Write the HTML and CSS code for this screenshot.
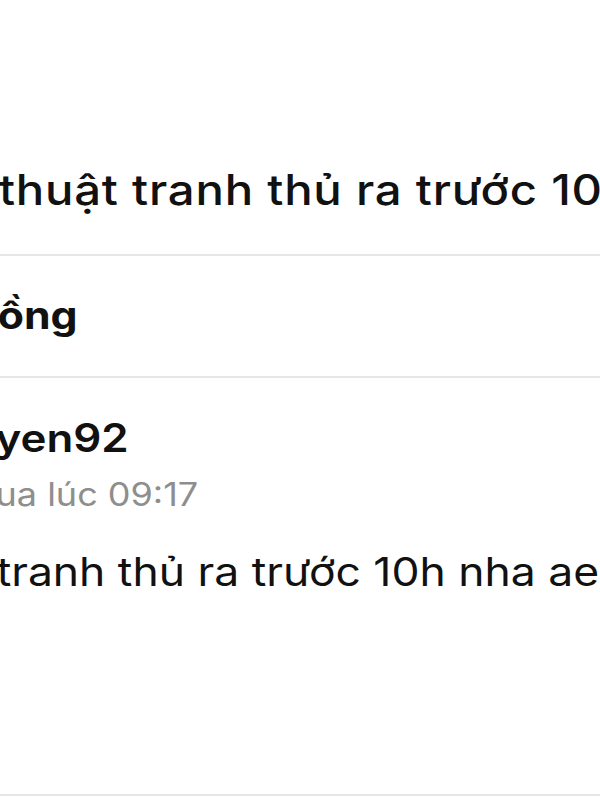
FILE: index.html
```html
<!DOCTYPE html>
<html lang="vi">
<head>
  <meta charset="UTF-8">
  <title>Bài viết</title>
  <link rel="stylesheet" href="styles.css">
</head>
<body>
  <div class="page">
    <div class="post-title">
      <h1>thuật tranh thủ ra trước 10h nha ae</h1>
    </div>
    <div class="group">
      <h2>ồng</h2>
    </div>
    <div class="comment">
      <div class="author">yen92</div>
      <div class="time">ua lúc 09:17</div>
      <p class="message">tranh thủ ra trước 10h nha ae</p>
    </div>
  </div>
</body>
</html>
```

FILE: styles.css
```css
body {
  margin: 0;
  background: #fff;
  font-family: Inter, "Noto Sans", sans-serif;
  color: #111;
  overflow: hidden;
}
.page {
  width: 534px;
  height: 800px;
  overflow: hidden;
  padding-top: 150px;
  box-sizing: border-box;
  /* the screenshot is a zoomed, slightly stretched crop */
  transform: scaleX(1.125);
  transform-origin: left top;
}
.post-title, .group, .comment {
  white-space: nowrap;
  border-bottom: 2px solid #e6e6e6;
}
.post-title {
  height: 104px;
}
.post-title h1 {
  margin: 0 0 0 -1px;
  font-size: 42px;
  font-weight: 500;
  line-height: 80px;
  letter-spacing: 0.7px;
}
.group {
  height: 120px;
}
.group h2 {
  margin: 0 0 0 -2px;
  padding-top: 36px;
  font-size: 38px;
  font-weight: 700;
  line-height: 46px;
}
.comment {
  height: 418px;
  padding-top: 37px;
  box-sizing: border-box;
}
.author {
  margin-left: -4px;
  font-size: 39px;
  font-weight: 600;
  line-height: 46px;
}
.time {
  margin: 14px 0 0 -4px;
  font-size: 32px;
  color: #8e8e8e;
  line-height: 40px;
}
.message {
  margin: 32px 0 0 -3px;
  font-size: 39.5px;
  line-height: 50px;
}
```
